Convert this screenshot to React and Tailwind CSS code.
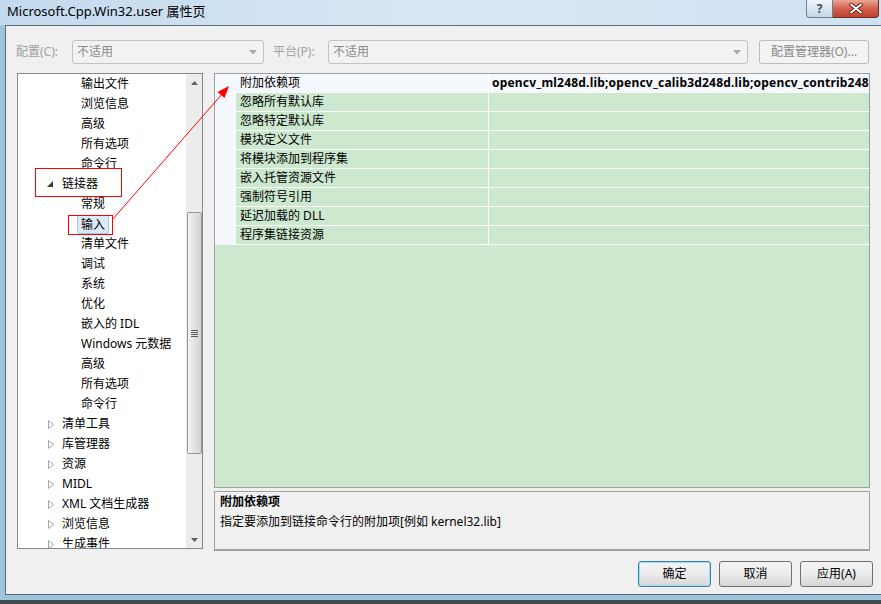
import React from "react";

const tree = [
  { t: "输出文件", l: 2 },
  { t: "浏览信息", l: 2 },
  { t: "高级", l: 2 },
  { t: "所有选项", l: 2 },
  { t: "命令行", l: 2 },
  { t: "链接器", l: 1, open: true },
  { t: "常规", l: 2 },
  { t: "输入", l: 2, sel: true },
  { t: "清单文件", l: 2 },
  { t: "调试", l: 2 },
  { t: "系统", l: 2 },
  { t: "优化", l: 2 },
  { t: "嵌入的 IDL", l: 2 },
  { t: "Windows 元数据", l: 2 },
  { t: "高级", l: 2 },
  { t: "所有选项", l: 2 },
  { t: "命令行", l: 2 },
  { t: "清单工具", l: 1 },
  { t: "库管理器", l: 1 },
  { t: "资源", l: 1 },
  { t: "MIDL", l: 1 },
  { t: "XML 文档生成器", l: 1 },
  { t: "浏览信息", l: 1 },
  { t: "生成事件", l: 1 },
];

const props = [
  "附加依赖项",
  "忽略所有默认库",
  "忽略特定默认库",
  "模块定义文件",
  "将模块添加到程序集",
  "嵌入托管资源文件",
  "强制符号引用",
  "延迟加载的 DLL",
  "程序集链接资源",
];

function Combo({ w, text }) {
  return (
    <div className={`${w} h-[24px] flex items-center justify-between rounded-[3px] border border-[#c3c3c3] bg-[#f2f2f2] pl-[4px] pr-[6px]`}>
      <span className="text-[12px] text-[#8a8a8a] leading-none">{text}</span>
      <svg width="8" height="5" viewBox="0 0 8 5">
        <polygon points="0,0 8,0 4,4.5" fill="#a8a8a8" />
      </svg>
    </div>
  );
}

function Btn({ children, def }) {
  return (
    <div
      className={`w-[73px] h-[26px] rounded-[3px] border flex items-center justify-center text-[12px] text-black bg-gradient-to-b from-[#f4f4f4] via-[#ebebeb] to-[#d6d6d6] ${
        def ? "border-[#3c7fb1] shadow-[inset_0_0_0_1px_#9fdcf7]" : "border-[#707070]"
      }`}
    >
      {children}
    </div>
  );
}

export default function App() {
  return (
    <div className="relative w-[881px] h-[604px] overflow-hidden bg-[#9fc5dd] flex flex-col font-['Noto_Sans','Noto_Sans_CJK_SC',sans-serif] text-black">
      {/* title bar */}
      <div className="h-[25px] shrink-0 flex items-start bg-gradient-to-r from-[#c4daee] via-[#d8e7f5] to-[#cfe2f3]">
        <span className="pl-[7px] pt-[3px] text-[13px] leading-[17px] text-black whitespace-nowrap">
          Microsoft.Cpp.Win32.user 属性页
        </span>
        <div className="ml-auto flex pr-[2px]">
          <div className="w-[27px] h-[18px] border border-t-0 border-[#6d7f93] rounded-bl-[4px] bg-gradient-to-b from-[#f1f5fa] to-[#c6d6e7] flex items-center justify-center text-[12px] font-bold text-[#3b4b5c] leading-none">
            ?
          </div>
          <div className="w-[46px] h-[18px] border border-t-0 border-l-0 border-[#6d2b24] rounded-br-[4px] bg-gradient-to-b from-[#e9a796] via-[#d2604d] to-[#c23f2f] flex items-center justify-center">
            <svg width="14" height="11" viewBox="0 0 14 11">
              <path d="M2 1.5 L12 9.5 M12 1.5 L2 9.5" stroke="#5a1d16" strokeWidth="3.6" strokeLinecap="round" />
              <path d="M2 1.5 L12 9.5 M12 1.5 L2 9.5" stroke="#ffffff" strokeWidth="2" strokeLinecap="round" />
            </svg>
          </div>
        </div>
      </div>

      {/* client area */}
      <div className="ml-[5px] w-[890px] h-[570px] shrink-0 border border-[#5b6b78] bg-[#f0f0f0] flex flex-col text-[12px]">
        {/* toolbar */}
        <div className="mt-[14px] h-[24px] flex items-center">
          <span className="ml-[10px] w-[56px] text-[#a0a0a0]">配置(C):</span>
          <Combo w="w-[192px]" text="不适用" />
          <span className="ml-[9px] w-[55px] text-[#a0a0a0]">平台(P):</span>
          <Combo w="w-[420px]" text="不适用" />
          <div className="ml-[11px] w-[110px] h-[24px] rounded-[3px] border border-[#bdbdbd] bg-[#f3f3f3] flex items-center justify-center text-[#8a8a8a]">
            配置管理器(O)...
          </div>
        </div>

        {/* main */}
        <div className="mt-[9px] flex items-start">
          {/* tree */}
          <div className="ml-[11px] w-[186px] h-[476px] shrink-0 border border-[#828790] bg-white flex">
            <div className="w-[168px] h-[474px] overflow-hidden">
              {tree.map((it, i) => (
                <div key={i} className="h-[20px] flex items-center whitespace-nowrap leading-[20px]">
                  {it.l === 1 ? (
                    <>
                      <span className={`w-[44px] flex justify-end ${it.open ? "pr-[9px]" : "pr-[8px]"}`}>
                        {it.open ? (
                          <svg width="6" height="6" viewBox="0 0 6 6">
                            <polygon points="6,0 6,6 0,6" fill="#3a3a3a" />
                          </svg>
                        ) : (
                          <svg width="6" height="9" viewBox="0 0 6 9">
                            <polygon points="0.5,0.5 5.5,4.5 0.5,8.5" fill="none" stroke="#a6a6a6" />
                          </svg>
                        )}
                      </span>
                      <span>{it.t}</span>
                    </>
                  ) : it.sel ? (
                    <span className="ml-[59px] h-[19px] px-[3px] border border-[#a9c7ea] bg-[#dce9f9] rounded-[2px] leading-[17px]">
                      {it.t}
                    </span>
                  ) : (
                    <span className="ml-[63px]">{it.t}</span>
                  )}
                </div>
              ))}
            </div>
            {/* scrollbar */}
            <div className="w-[16px] h-[474px] bg-[#ececec] flex flex-col items-center">
              <div className="h-[17px] flex items-center justify-center">
                <svg width="7" height="4" viewBox="0 0 7 4">
                  <polygon points="0,4 7,4 3.5,0" fill="#606060" />
                </svg>
              </div>
              <div className="h-[121px]" />
              <div className="w-[15px] h-[242px] rounded-[2px] border border-[#979797] bg-gradient-to-r from-[#f3f3f3] via-[#e2e2e2] to-[#d3d3d3] flex items-center justify-center">
                <div className="flex flex-col gap-[1px]">
                  <div className="w-[7px] h-[1px] bg-[#5a5a5a]" />
                  <div className="w-[7px] h-[1px] bg-[#5a5a5a]" />
                  <div className="w-[7px] h-[1px] bg-[#5a5a5a]" />
                  <div className="w-[7px] h-[1px] bg-[#5a5a5a]" />
                </div>
              </div>
              <div className="flex-1" />
              <div className="h-[17px] flex items-center justify-center">
                <svg width="7" height="4" viewBox="0 0 7 4">
                  <polygon points="0,0 7,0 3.5,4" fill="#606060" />
                </svg>
              </div>
            </div>
          </div>

          {/* right column */}
          <div className="ml-[11px] w-[656px] shrink-0 flex flex-col">
            <div className="h-[415px] border border-[#a0a0a0] bg-[#cce8cf] flex flex-col overflow-hidden">
              <div className="flex">
                <div className="w-[21px] shrink-0 bg-[#f4f7fb]" />
                <div className="flex-1 min-w-0 flex flex-col">
                  {props.map((p, i) => (
                    <div key={i} className="h-[19px] flex border-b border-white">
                      <div
                        className={`w-[253px] shrink-0 border-r border-white pl-[4px] leading-[18px] whitespace-nowrap ${
                          i === 0 ? "bg-[#f4f7fb]" : "bg-[#cce8cf]"
                        }`}
                      >
                        {p}
                      </div>
                      <div
                        className={`flex-1 min-w-0 pl-[3px] leading-[18px] whitespace-nowrap overflow-hidden font-bold tracking-[0.2px] ${
                          i === 0 ? "bg-[#f4f7fb]" : "bg-[#cce8cf]"
                        }`}
                      >
                        {i === 0 ? "opencv_ml248d.lib;opencv_calib3d248d.lib;opencv_contrib248d.lib;opencv_core248d.lib" : ""}
                      </div>
                    </div>
                  ))}
                </div>
              </div>
              <div className="flex-1" />
            </div>
            <div className="mt-[3px] h-[60px] border border-[#a0a0a0] border-b-[2px] bg-[#f0f0f0] pl-[5px]">
              <div className="font-bold leading-[20px]">附加依赖项</div>
              <div className="leading-[20px]">指定要添加到链接命令行的附加项[例如 kernel32.lib]</div>
            </div>
          </div>
        </div>

        {/* buttons */}
        <div className="mt-[10px] pl-[632px] flex gap-[8px]">
          <Btn def>确定</Btn>
          <Btn>取消</Btn>
          <Btn>应用(A)</Btn>
        </div>
      </div>

      <div className="h-[5px] shrink-0 bg-[#9fc5dd]" />
      <div className="flex-1 bg-[#3f4b4f]" />

      {/* red annotations overlay */}
      <svg className="absolute left-0 top-0 pointer-events-none" width="881" height="604">
        <rect x="35.5" y="168.5" width="86" height="28" fill="none" stroke="#ff0000" strokeWidth="1" />
        <rect x="68.5" y="215.5" width="44" height="19" fill="none" stroke="#ff0000" strokeWidth="1" />
        <line x1="112" y1="220" x2="223" y2="93" stroke="#ff0000" strokeWidth="1" />
        <polygon points="229,86 224.5,98 217.5,92" fill="#ff0000" />
      </svg>
    </div>
  );
}
